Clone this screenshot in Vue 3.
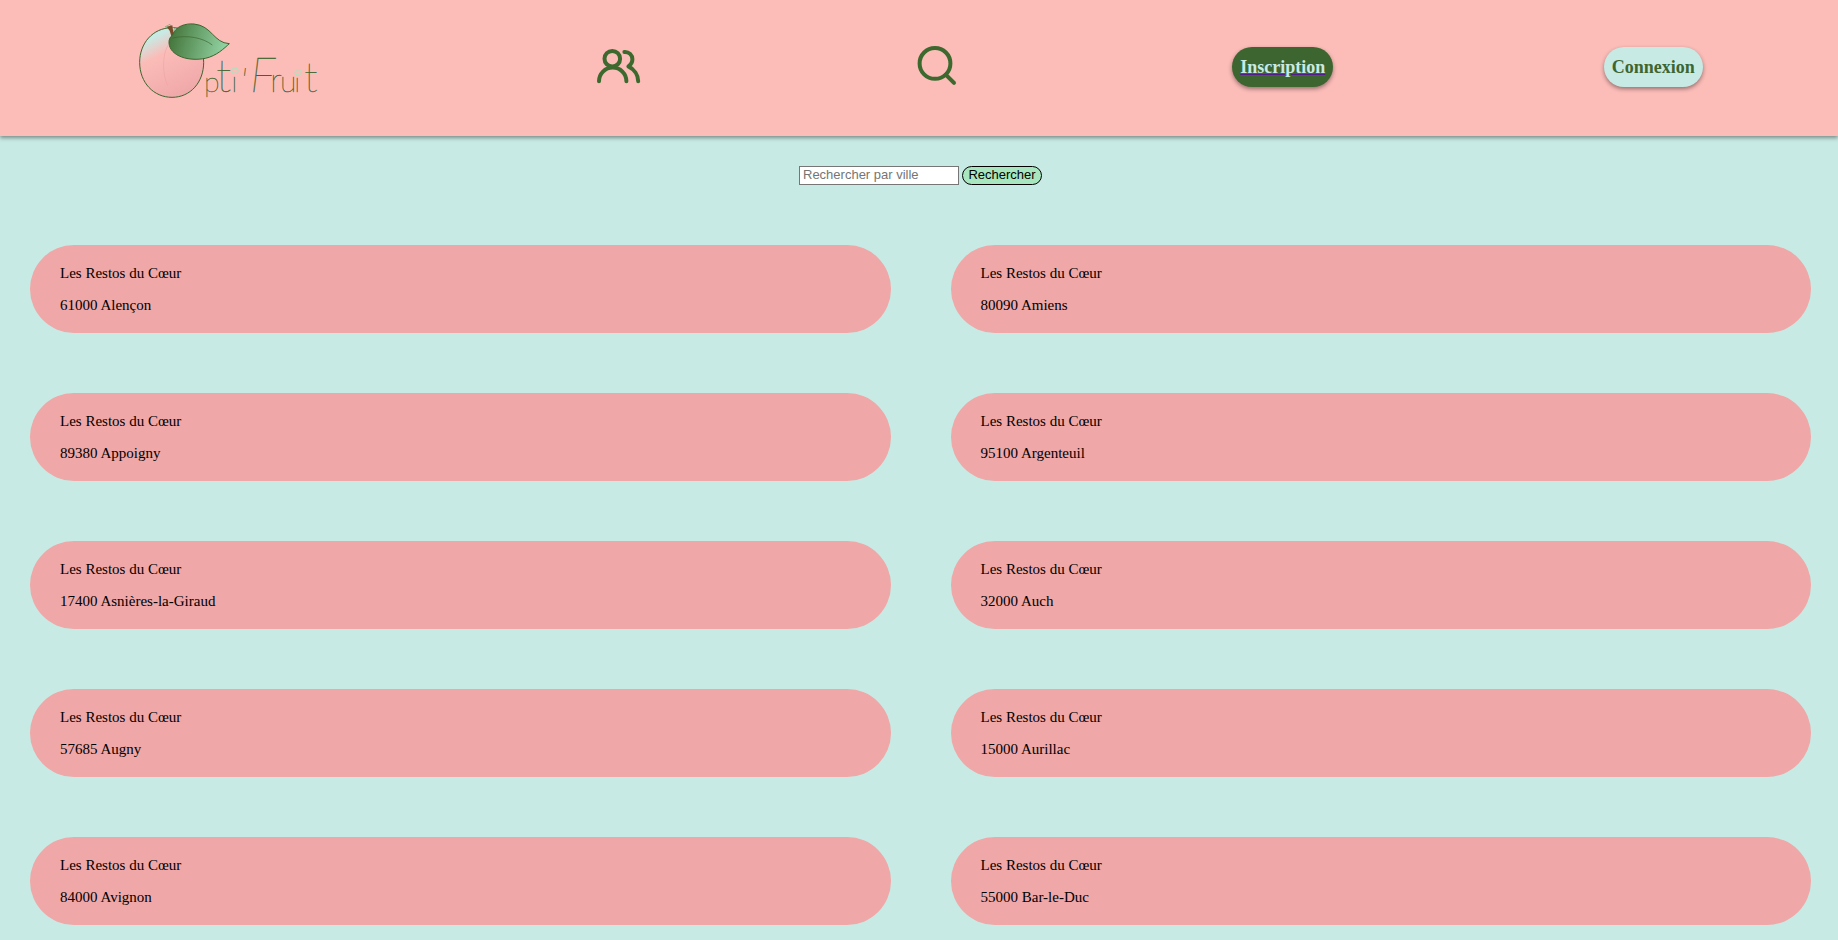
<script setup>
import { ref } from 'vue'

const city = ref('')

const centers = [
  { name: 'Les Restos du Cœur', place: '61000 Alençon' },
  { name: 'Les Restos du Cœur', place: '80090 Amiens' },
  { name: 'Les Restos du Cœur', place: '89380 Appoigny' },
  { name: 'Les Restos du Cœur', place: '95100 Argenteuil' },
  { name: 'Les Restos du Cœur', place: '17400 Asnières-la-Giraud' },
  { name: 'Les Restos du Cœur', place: '32000 Auch' },
  { name: 'Les Restos du Cœur', place: '57685 Augny' },
  { name: 'Les Restos du Cœur', place: '15000 Aurillac' },
  { name: 'Les Restos du Cœur', place: '84000 Avignon' },
  { name: 'Les Restos du Cœur', place: '55000 Bar-le-Duc' },
]
</script>

<template>
  <div class="page">
    <header class="header">
      <a href="#" class="icon-link" aria-label="Opti'Fruit">
        <svg class="logo" viewBox="45 30 570 282" aria-hidden="true">
          <defs>
            <linearGradient id="skin" x1="0.15" y1="0.05" x2="0.6" y2="1">
              <stop offset="0.1" stop-color="#c8eae4" />
              <stop offset="0.36" stop-color="#fbbcb8" />
              <stop offset="1" stop-color="#efa8a8" />
            </linearGradient>
            <linearGradient id="leaf" x1="0" y1="0.4" x2="1" y2="0.55">
              <stop offset="0" stop-color="#43743a" />
              <stop offset="1" stop-color="#96d8a8" />
            </linearGradient>
          </defs>
          <path d="M155 53C98 54 59 100 59 157C59 218 101 262 156 262C212 262 251 216 251 157C251 99 211 52 155 53Z" fill="url(#skin)" stroke="#3d652f" stroke-width="3" />
          <path d="M144 106C126 135 127 195 143 226" fill="none" stroke="#e9a0a0" stroke-width="1.5" />
          <path d="M136 50L150 43L154 51L165 54L160 64L143 54Z" fill="#a8e6bf" stroke="#3d652f" stroke-width="1" />
          <path d="M140 50L157 46L161 76L154 79L149 62Z" fill="#7a4a2b" />
          <path d="M157 76C167 47 198 40 222 42C276 47 281 99 328 101C312 115 291 137 256 145C207 155 151 139 147 100C146 88 151 80 157 76Z" fill="url(#leaf)" stroke="#3d652f" stroke-width="3" />
          <path d="M157 84C203 74 248 83 277 105" fill="none" stroke="#3d652f" stroke-width="2" />
          <text class="wordmark" y="245">
            <tspan x="252" font-size="86">p</tspan><tspan x="288" font-size="140">t</tspan><tspan x="334" font-size="90">i</tspan><tspan x="362" font-size="100" font-style="italic">'</tspan><tspan x="390" font-size="144" font-style="italic">F</tspan><tspan x="450" font-size="104">r</tspan><tspan x="480" font-size="90">u</tspan><tspan x="523" font-size="84">i</tspan><tspan x="552" font-size="124">t</tspan>
          </text>
          <ellipse class="dot" cx="345" cy="182" rx="10" ry="8" />
          <ellipse class="dot" cx="534" cy="187" rx="9" ry="8" />
        </svg>
      </a>
      <a href="#" class="icon-link" aria-label="Associations">
        <svg class="icon" viewBox="16 12 48 48" aria-hidden="true">
          <circle cx="32.3" cy="27.7" r="7.8" />
          <path d="M19 50.3A13.7 13.7 0 0 1 46.4 50.3" />
          <path d="M44.4 20.9C49 20.6 52.4 24 52.4 28.3C52.4 31.5 50.8 33.8 48.4 35.4C54.2 38.3 58.2 44 58.2 50.3" />
        </svg>
      </a>
      <a href="#" class="icon-link" aria-label="Recherche">
        <svg class="icon" viewBox="14 13 48 48" aria-hidden="true">
          <circle cx="35" cy="33.4" r="15.4" />
          <path d="M46 44.8L54 52.8" />
        </svg>
      </a>
      <a href="#" class="pill signup">Inscription</a>
      <a href="#" class="pill login">Connexion</a>
    </header>

    <main class="main">
      <form class="search" @submit.prevent>
        <input v-model="city" type="text" aria-label="Rechercher par ville" placeholder="Rechercher par ville" />
        <button type="submit">Rechercher</button>
      </form>
      <section class="grid">
        <article v-for="center in centers" :key="center.place" class="card">
          <p>{{ center.name }}</p>
          <p>{{ center.place }}</p>
        </article>
      </section>
    </main>
  </div>
</template>

<style>
body {
  margin: 0;
  background: #c8eae4;
}
</style>

<style scoped>
.page {
  font-family: "Liberation Serif", "Times New Roman", serif;
  color: #000;
}

.header {
  display: flex;
  justify-content: space-around;
  align-items: center;
  padding: 20px 0 22px;
  background: #fcbcb8;
  box-shadow: 0 2px 4px rgba(0, 0, 0, 0.4);
}

.icon-link {
  display: flex;
}

.logo {
  width: 190px;
  height: 94px;
}

.wordmark {
  font-family: Lato, sans-serif;
  font-weight: 100;
  fill: #3d652f;
  stroke: #3d652f;
  stroke-width: 1;
}

.dot {
  fill: #fcbcb8;
  stroke: #a8e6bf;
  stroke-width: 3;
}

.icon {
  width: 48px;
  height: 48px;
  fill: none;
  stroke: #3d692f;
  stroke-width: 4;
  stroke-linecap: round;
  stroke-linejoin: round;
}

.pill {
  box-sizing: border-box;
  height: 40px;
  padding: 0 8px;
  border-radius: 20px;
  font-size: 18px;
  font-weight: bold;
  line-height: 40px;
  box-shadow: 0 2px 4px rgba(0, 0, 0, 0.4);
}

.signup {
  background: #3d652f;
  color: #c8eae4;
  text-decoration: underline;
  text-decoration-color: #551a8b;
}

.login {
  background: #c8eae4;
  color: #3d652f;
  text-decoration: none;
}

.main {
  padding: 30px 27px 15px 30px;
}

.search {
  display: flex;
  justify-content: center;
  gap: 3px;
  margin-bottom: 60px;
}

.search input,
.search button {
  box-sizing: border-box;
  height: 19px;
  margin: 0;
  font-family: "Liberation Sans", Arial, sans-serif;
  font-size: 13px;
  line-height: 15px;
}

.search input {
  width: 160px;
  padding: 0 3px 2px;
  border: 1px solid #767676;
  border-radius: 0;
  background: #fff;
}

.search input::placeholder {
  color: #757575;
}

.search button {
  width: 80px;
  padding: 0 0 2px;
  border: 1px solid #000;
  border-radius: 10px;
  background: #a8e6bf;
  color: #000;
}

.grid {
  display: grid;
  grid-template-columns: repeat(2, 1fr);
  gap: 60px;
}

.card {
  display: flex;
  flex-direction: column;
  gap: 14px;
  padding: 19px 30px;
  border-radius: 44px;
  background: #efa7a7;
  font-size: 15px;
  line-height: 18px;
}

.card p {
  margin: 0;
}
</style>
